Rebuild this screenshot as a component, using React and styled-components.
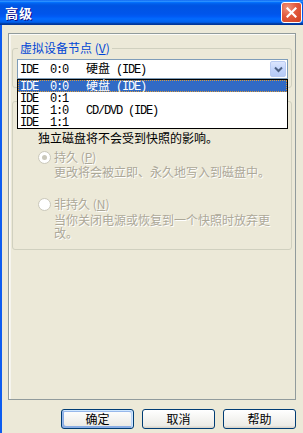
import React from 'react';
import styled, { createGlobalStyle } from 'styled-components';

const GlobalStyle = createGlobalStyle`
  html, body {
    margin: 0;
    padding: 0;
    background: #ECE9D8;
  }
  body {
    font-family: "Noto Sans CJK SC", "Liberation Sans", sans-serif;
    font-size: 12px;
  }
`;

const Window = styled.div`
  width: 303px;
  height: 433px;
  overflow: hidden;
  display: flex;
  flex-direction: column;
  background: #ECE9D8;
`;

const TitleBar = styled.div`
  height: 25px;
  flex: none;
  display: flex;
  align-items: center;
  justify-content: space-between;
  padding: 0 1px 0 5px;
  background: linear-gradient(180deg, #0058ee 0%, #3593ff 4%, #288eff 6%, #127dff 8%, #036ffc 10%,
    #0262ee 14%, #0057e5 20%, #0054e3 24%, #0055eb 56%, #005bf5 66%, #026afe 76%,
    #0062ef 86%, #0052d6 92%, #0040ab 94%, #003092 100%);
`;

const Title = styled.span`
  color: #fff;
  font-weight: bold;
  font-size: 13px;
  line-height: 14px;
  letter-spacing: 1px;
  text-shadow: 1px 1px #0f1089;
`;

const CloseButton = styled.div`
  width: 21px;
  height: 21px;
  box-sizing: border-box;
  border: 1px solid #fff;
  border-radius: 3px;
  background: radial-gradient(circle at 30% 25%, #f0947c 0%, #e2593d 45%, #d0401f 100%);
  display: flex;
  align-items: center;
  justify-content: center;
`;

const Body = styled.div`
  flex: 1;
  display: flex;
  flex-direction: column;
  border-left: 2px solid #0d5cf0;
  padding: 8px 7px 0 6px;
`;

const Page = styled.div`
  height: 367px;
  box-sizing: border-box;
  border: 1px solid #919b9c;
  box-shadow: inset 1px 1px #fbfbf8, inset 2px 0 #f5f4ee;
  padding: 7px 3px 0 3px;
  display: flex;
  flex-direction: column;
`;

const GroupBox = styled.fieldset`
  margin: ${p => p.$gap || 0}px 0 0 0;
  padding: ${p => p.$padTop || 4}px 3px ${p => p.$padBottom || 8}px 4px;
  border: 1px solid #d0d0bf;
  border-radius: 3px;
  min-width: 0;
`;

const Legend = styled.legend`
  color: #0046d5;
  font-size: 12px;
  line-height: 14px;
  padding: 0 2px;
  margin-left: 1px;
`;

const Combo = styled.div`
  position: relative;
  height: 20px;
  box-sizing: border-box;
  border: 1px solid #7f9db9;
  background: #fff;
  display: flex;
  align-items: center;
  padding-left: 2px;
`;

const ComboArrow = styled.div`
  margin-left: auto;
  margin-right: 1px;
  width: 16px;
  height: 16px;
  box-sizing: border-box;
  border-radius: 2px;
  border: 1px solid #b9cbf3;
  background: linear-gradient(180deg, #dce6fe 0%, #c4d5fc 50%, #b6cbf7 100%);
  display: flex;
  align-items: center;
  justify-content: center;
`;

const Row = styled.div`
  display: flex;
  align-items: center;
  height: 12px;
  line-height: 12px;
  white-space: pre;
  color: ${p => (p.$selected ? '#fff' : '#000')};
`;

const Col = styled.span`
  flex: none;
  width: ${p => (p.$w ? `${p.$w}px` : 'auto')};
`;

const Mono = styled.span`
  font-family: "Liberation Mono", "DejaVu Sans Mono", monospace;
  font-size: 12px;
  letter-spacing: -1.2px;
`;

const Cjk = styled.span`
  font-family: "Noto Sans CJK SC", sans-serif;
  font-size: 12px;
`;

const DropList = styled.div`
  position: absolute;
  top: calc(100% + 1px);
  left: -1px;
  right: -1px;
  z-index: 2;
  border: 1px solid #000;
  background: #fff;
`;

const Item = styled.div`
  height: 12px;
  padding-left: 2px;
  box-sizing: border-box;
  background: ${p => (p.$selected ? '#316ac5' : 'transparent')};
  outline: ${p => (p.$selected ? '1px dotted #d89a3c' : 'none')};
  outline-offset: -1px;
`;

const CheckBox = styled.span`
  display: block;
  width: 13px;
  height: 13px;
  box-sizing: border-box;
  margin: 0 0 6px 1px;
  border: 1px solid #1c5180;
  background: #fff;
`;

const RadioRow = styled.div`
  display: flex;
  align-items: center;
  gap: 3px;
  height: 14px;
  margin: ${p => p.$top || 0}px 0 0 21px;
  line-height: 14px;
  color: #aca899;
  text-shadow: 1px 1px 0 #fff;
`;

const RadioDot = styled.span`
  width: 13px;
  height: 13px;
  box-sizing: border-box;
  border-radius: 50%;
  border: 1px solid #cac8bb;
  background: #fff;
  display: flex;
  align-items: center;
  justify-content: center;
  &::after {
    content: '';
    width: 5px;
    height: 5px;
    border-radius: 50%;
    background: ${p => (p.$checked ? '#cac8bb' : 'transparent')};
  }
`;

const Desc = styled.div`
  margin: ${p => p.$top || 0}px 0 0 ${p => p.$indent || 0}px;
  max-width: 222px;
  line-height: 13px;
  color: ${p => (p.$disabled ? '#aca899' : '#000')};
  text-shadow: ${p => (p.$disabled ? '1px 1px 0 #fff' : 'none')};
`;

const ButtonRow = styled.div`
  display: flex;
  justify-content: flex-end;
  gap: 8px;
  margin-top: 9px;
`;

const Button = styled.button`
  width: 73px;
  height: 20px;
  box-sizing: border-box;
  padding: 0;
  font-family: "Noto Sans CJK SC", sans-serif;
  font-size: 12px;
  line-height: 16px;
  color: #000;
  border: 1px solid #003c74;
  border-radius: 3px;
  background: linear-gradient(180deg, #fff 0%, #ecebe6 86%, #d6d0c5 100%);
  box-shadow: ${p => (p.$default
    ? 'inset -1px 1px #cee7ff, inset 1px 2px #98b8ea, inset -2px 2px #bcd4f6, inset 1px -1px #89ade4, inset 2px -2px #89ade4'
    : 'none')};
`;

const nodes = [
  { bus: 'IDE', slot: '0:0', kind: '硬盘', tag: ' (IDE)' },
  { bus: 'IDE', slot: '0:1' },
  { bus: 'IDE', slot: '1:0', tag: 'CD/DVD (IDE)' },
  { bus: 'IDE', slot: '1:1' },
];

function NodeLine({ node, selected }) {
  return (
    <Row $selected={selected}>
      <Col $w={30}><Mono>{node.bus}</Mono></Col>
      <Col $w={36}><Mono>{node.slot}</Mono></Col>
      <Col>
        {node.kind && <Cjk>{node.kind}</Cjk>}
        {node.tag && <Mono>{node.tag}</Mono>}
      </Col>
    </Row>
  );
}

export default function App() {
  return (
    <Window>
      <GlobalStyle />
      <TitleBar>
        <Title>高级</Title>
        <CloseButton>
          <svg width="11" height="11" viewBox="0 0 11 11">
            <path d="M1.5 1.5 L9.5 9.5 M9.5 1.5 L1.5 9.5" stroke="#fff" strokeWidth="2.2" strokeLinecap="square" />
          </svg>
        </CloseButton>
      </TitleBar>
      <Body>
        <Page>
          <GroupBox>
            <Legend>虚拟设备节点 (<u>V</u>)</Legend>
            <Combo>
              <NodeLine node={nodes[0]} />
              <ComboArrow>
                <svg width="9" height="7" viewBox="0 0 9 7">
                  <path d="M1 1.5 L4.5 5 L8 1.5" fill="none" stroke="#4d6185" strokeWidth="2" />
                </svg>
              </ComboArrow>
              <DropList>
                {nodes.map((n, i) => (
                  <Item key={i} $selected={i === 0}>
                    <NodeLine node={n} selected={i === 0} />
                  </Item>
                ))}
              </DropList>
            </Combo>
          </GroupBox>

          <GroupBox $gap={13} $padTop={10} $padBottom={10}>
            <CheckBox />
            <Desc $indent={21}>独立磁盘将不会受到快照的影响。</Desc>
            <RadioRow $top={6}>
              <RadioDot $checked />
              <span>持久 (<u>P</u>)</span>
            </RadioRow>
            <Desc $indent={37} $top={1} $disabled>更改将会被立即、永久地写入到磁盘中。</Desc>
            <RadioRow $top={19}>
              <RadioDot />
              <span>非持久 (<u>N</u>)</span>
            </RadioRow>
            <Desc $indent={37} $top={2} $disabled>当你关闭电源或恢复到一个快照时放弃更改。</Desc>
          </GroupBox>
        </Page>
        <ButtonRow>
          <Button $default>确定</Button>
          <Button>取消</Button>
          <Button>帮助</Button>
        </ButtonRow>
      </Body>
    </Window>
  );
}
